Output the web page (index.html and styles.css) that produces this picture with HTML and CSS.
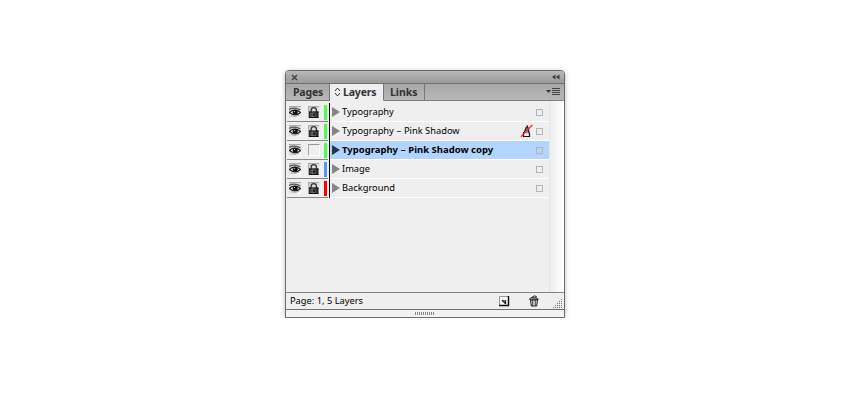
FILE: index.html
```
<!DOCTYPE html>
<html lang="en">
<head>
<meta charset="utf-8">
<title>Layers</title>
<link rel="stylesheet" href="styles.css">
</head>
<body>
<svg width="0" height="0" class="defs">
  <defs>
    <linearGradient id="well" x2="1" y2="1"><stop stop-color="#c4c4c4"/><stop offset="1" stop-color="#fff"/></linearGradient>
    <linearGradient id="metal" x2="1"><stop stop-color="#222"/><stop offset=".4" stop-color="#888"/><stop offset="1" stop-color="#111"/></linearGradient>
    <symbol id="eye" viewBox="0 0 12 12">
      <path d="M0 0h12v12H0z" fill="url(#well)"/>
      <path d="M0 .5h12" stroke="#aaa"/>
      <path d="M0 3.500Q5.500 .6 11.500 4" fill="none" stroke="#555" stroke-width="1.300"/>
      <path d="M.3 6.500Q5.500 1.800 11.600 6.400Q6 11.200 .3 6.500z" fill="#eee" stroke="#222" stroke-width="1.300"/>
      <circle cx="6.200" cy="6.300" r="2.500" fill="#111"/>
      <circle cx="5.500" cy="5.500" r=".6" fill="#ddd"/>
      <path d="M2 9.500Q6 11.500 10 9.300" fill="none" stroke="#999" stroke-width=".8"/>
    </symbol>
    <symbol id="lock" viewBox="0 0 12 12">
      <path d="M0 0h12v12H0z" fill="url(#well)"/>
      <path d="M0 .5h11M.5 0v12" stroke="#aaa"/>
      <path d="M3.200 6V4.300a2.600 2.600 0 0 1 5.200 0V6" fill="none" stroke="#333" stroke-width="1.300"/>
      <path d="M1 5.500h9.500V12H1z" fill="url(#metal)"/>
      <path d="M1 6h9.500M1 11.500h9.500" stroke="#111"/>
      <path d="M3 8.300h6M3 9.800h6" stroke="#333" stroke-width=".6"/>
      <path d="M5.200 7.300h1.400v2.700H5.200z" fill="#111"/>
    </symbol>
  </defs>
</svg>
<main class="panel">
  <header class="titlebar">
    <svg width="7" height="7"><path d="M1 1l5 5M6 1L1 6" stroke="#444" stroke-width="1.500"/></svg>
    <svg width="8" height="6"><path d="M3.500 .5v5L0 3zM7.500 .5v5L4 3z" fill="#3c3c3c"/></svg>
  </header>
  <nav class="tabs">
    <div class="tab pages"><span>Pages</span></div>
    <div class="tab layers"><svg width="7" height="10"><path d="M1 4l2.500-3L6 4M1 6l2.500 3L6 6" fill="none" stroke="#333"/></svg><span>Layers</span></div>
    <div class="tab links"><span>Links</span></div>
    <div class="menu"><svg width="14" height="8"><path d="M0 2h5L2.500 5z" fill="#333"/><path d="M6 .5h8M6 2.500h8M6 4.500h8M6 6.500h8" stroke="#444"/></svg></div>
  </nav>
  <section class="body">
    <div class="list">
      <div class="row"><div class="controls"><svg class="ic"><use href="#eye"/></svg><svg class="ic lock"><use href="#lock"/></svg><i class="color green"></i></div><div class="layer"><i class="arrow"></i><span class="name">Typography</span><i class="target"></i></div></div>
      <div class="row"><div class="controls"><svg class="ic"><use href="#eye"/></svg><svg class="ic lock"><use href="#lock"/></svg><i class="color green"></i></div><div class="layer"><i class="arrow"></i><span class="name">Typography <b class="dash">–</b> Pink Shadow</span>
        <svg class="pen" width="13" height="14"><path d="M7 1Q4 5.500 4.500 9.500h5Q9.500 5 7 1z" fill="#999"/><path d="M7 1.500Q9 5 9 9.500M6.500 3L4.500 8" fill="none" stroke="#222" stroke-width="1.300"/><path d="M4.500 9.500h5v3h-5z" fill="#eee"/><path d="M4 12.500h6M9.500 9v4M3.500 8v5" stroke="#111" stroke-width="1.200"/><path d="M.8 12.800L12.300 1" stroke="#f22" stroke-width="1.200"/></svg>
        <i class="target"></i></div></div>
      <div class="row selected"><div class="controls"><svg class="ic"><use href="#eye"/></svg><i class="ic empty lock"></i><i class="color green"></i></div><div class="layer"><i class="arrow"></i><span class="name">Typography <b class="dash">–</b> Pink Shadow copy</span><i class="target"></i></div></div>
      <div class="row"><div class="controls"><svg class="ic"><use href="#eye"/></svg><svg class="ic lock"><use href="#lock"/></svg><i class="color blue"></i></div><div class="layer"><i class="arrow"></i><span class="name">Image</span><i class="target"></i></div></div>
      <div class="row"><div class="controls"><svg class="ic"><use href="#eye"/></svg><svg class="ic lock"><use href="#lock"/></svg><i class="color red"></i></div><div class="layer"><i class="arrow"></i><span class="name">Background</span><i class="target"></i></div></div>
    </div>
    <div class="scroll"></div>
  </section>
  <footer class="status">
    <span class="summary">Page: 1, 5 Layers</span>
    <svg class="new" width="11" height="11"><path d="M.5 .5h9v9h-9z" fill="#f8f8f8" stroke="#999"/><path d="M9.500 0v9.500H0" fill="none" stroke="#111" stroke-width="1.500"/><path d="M3 4h3v4L3 5z" fill="#999"/><path d="M3 4l4 4M6.500 4v4" fill="none" stroke="#222" stroke-width="1.200"/></svg>
    <svg class="trash" width="12" height="12"><path d="M2.500 5h7l-.8 6H3.300z" fill="#ddd" stroke="#222"/><path d="M4.700 5v6M7.300 5v6" stroke="#333" stroke-width=".9"/><path d="M1.300 4.300L3 2.500l5 .3 2.500 1.500z" fill="#aaa" stroke="#222" stroke-width=".9"/><path d="M4 2.300L6.500 .8 9 2" fill="none" stroke="#222"/></svg>
    <svg class="resize" width="9" height="9"><path d="M8 0h1v1H8zM6 2h1v1H6zM8 2h1v1H8zM4 4h1v1H4zM6 4h1v1H6zM8 4h1v1H8zM2 6h1v1H2zM4 6h1v1H4zM6 6h1v1H6zM8 6h1v1H8zM0 8h1v1H0zM2 8h1v1H2zM4 8h1v1H4zM6 8h1v1H6zM8 8h1v1H8z" fill="#777"/></svg>
  </footer>
  <div class="grip"><i></i></div>
</main>
</body>
</html>
```
FILE: styles.css
```
* { box-sizing: border-box; }
body { margin: 0; padding: 70px 0 0 285px; background: #fff; color: #000; font: 9.3px/18px "Noto Sans", sans-serif; }
svg { display: block; flex: none; }
.defs { position: absolute; }
.panel { width: 280px; height: 248px; border: 1px solid #6c6c6c; border-radius: 4px 4px 0 0; background: #efefef; overflow: hidden; display: flex; flex-direction: column; box-shadow: 0 1px 5px rgba(0,0,0,.28); }
.titlebar { height: 13px; flex: none; display: flex; justify-content: space-between; align-items: center; padding: 0 4px 0 4.5px; background: linear-gradient(#b8b8b8, #9b9b9b); border-bottom: 1px solid #707070; }
.tabs { height: 17px; flex: none; display: flex; background: linear-gradient(#a8a8a8, #b8b8b8); font-size: 10.5px; font-weight: 700; color: #333; }
.tab { border-right: 1px solid #777; border-bottom: 1px solid #808080; display: flex; align-items: center; line-height: 16px; white-space: nowrap; }
.tab span { letter-spacing: -.15px; }
.pages { width: 44px; padding-left: 7px; }
.layers { width: 54px; padding-left: 4px; gap: 2px; background: #efefef; border-bottom-color: #efefef; }
.links { width: 41px; padding-left: 6px; }
.tab.links span { letter-spacing: 0; }
.menu { flex: 1; border-bottom: 1px solid #808080; display: flex; justify-content: flex-end; align-items: center; padding-right: 4px; }
.body { flex: 1; display: flex; min-height: 0; }
.list { width: 263px; padding-top: 2px; }
.row { height: 19px; display: flex; }
.controls { width: 44px; border-right: 1px solid #000; display: flex; align-items: center; padding-left: 3px; background: linear-gradient(#888, #888) 1px 100% / 41px 1px no-repeat; }
.ic { width: 12px; height: 12px; margin-top: -1px; }
.lock { margin-left: 7px; }
.empty { border: 1px solid; border-color: #999 #fff #fff #aaa; }
.color { width: 3px; height: 15px; margin-left: 4px; }
.green { background: #4dff4d; }
.blue { background: #4f99ff; }
.red { background: #f00; }
.layer { flex: 1; display: flex; align-items: center; padding: 0 6px 0 2px; border-bottom: 1px solid #fff; }
.selected .layer { background: #b3d4ff; }
.arrow { width: 8px; height: 10px; background: #858585; clip-path: polygon(0 0, 100% 50%, 0 100%); }
.selected .arrow { background: #29374e; }
.name { margin: 0 auto 0 2px; white-space: nowrap; }
.dash { font-weight: inherit; margin: 0 .3px; }
.selected .name { font-weight: 700; font-size: 9.5px; }
.pen { margin-right: 3px; }
.target { width: 7px; height: 7px; border: 1px solid #b4b4b4; margin-top: 1px; }
.scroll { flex: 1; border-left: 1px solid #e4e4e4; background: linear-gradient(90deg, #ededed, #fafafa 70%, #fff); }
.status { height: 18px; flex: none; display: flex; align-items: center; border-top: 1px solid #858585; border-bottom: 1px solid #707070; padding-left: 4px; }
.summary { margin: -1px auto 0 0; line-height: 16px; }
.new { margin-right: 18px; }
.trash { margin-right: 13px; }
.resize { margin: 5px 2px 0 0; }
.grip { height: 7px; flex: none; display: flex; justify-content: center; align-items: center; background: #f2f2f2; }
.grip i { width: 19px; height: 3px; margin-right: 2px; background: repeating-linear-gradient(90deg, #888 0 1px, transparent 1px 2px); }
```
